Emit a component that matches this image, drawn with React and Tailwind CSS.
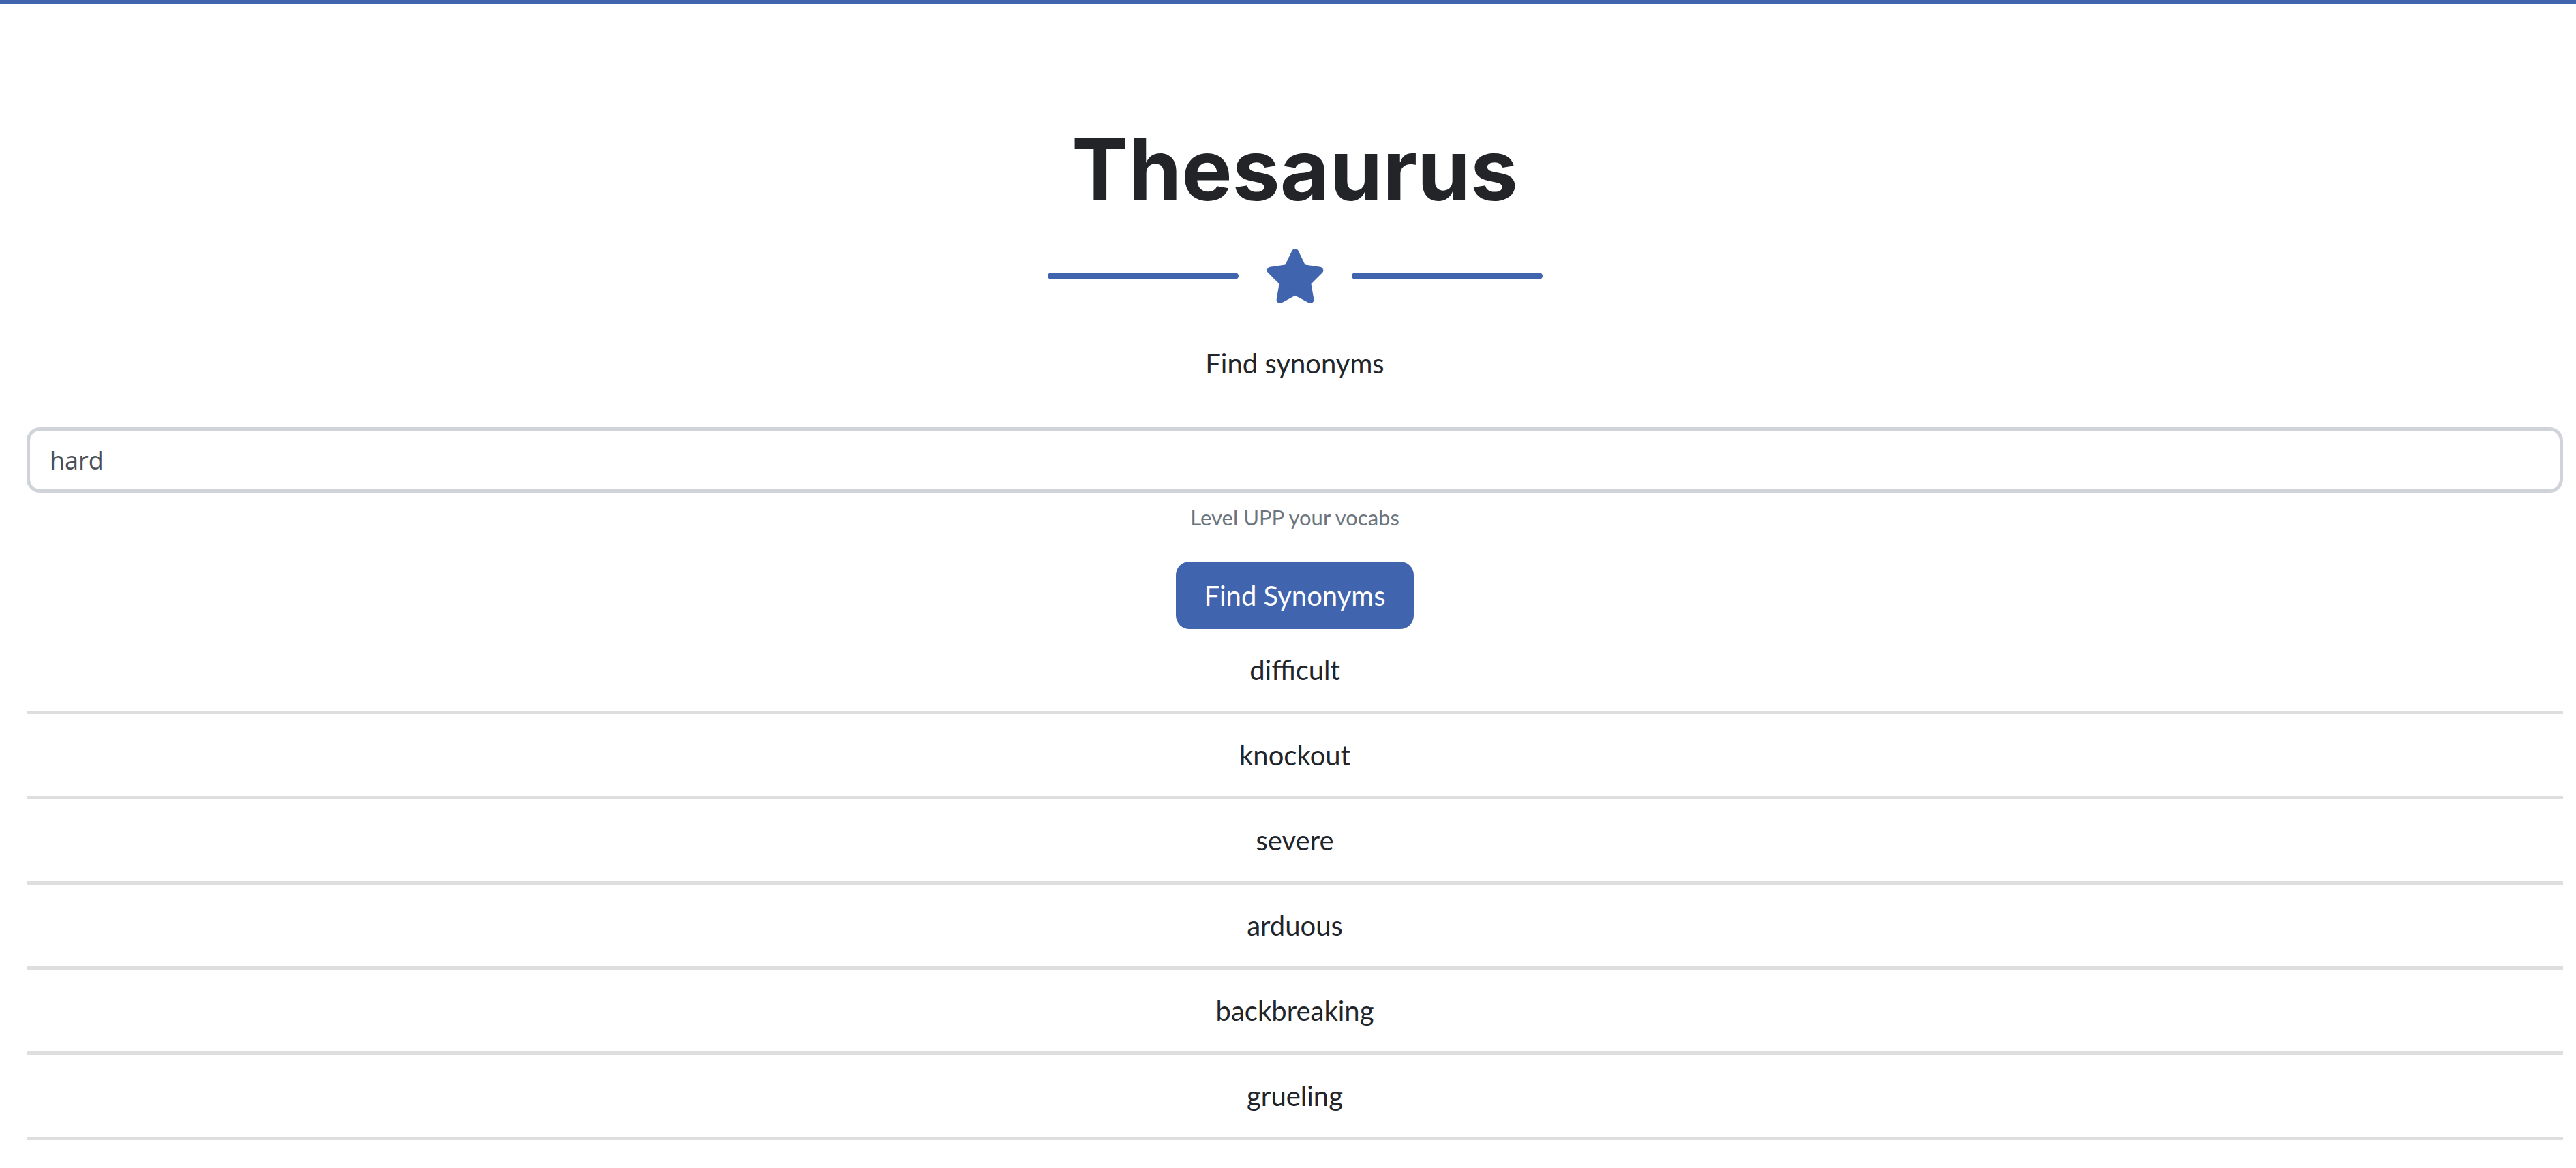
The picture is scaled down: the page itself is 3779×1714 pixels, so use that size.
import React, { useState } from "react";

const SYNONYMS = ["difficult", "knockout", "severe", "arduous", "backbreaking", "grueling"];

const Star = () => (
  <svg viewBox="0 0 576 512" className="h-[80px] w-[90px] fill-[#4164ae]">
    <path d="M316.9 18C311.6 7 300.4 0 288.1 0s-23.4 7-28.8 18L195 150.3 51.4 171.5c-12 1.8-22 10.2-25.7 21.7s-.7 24.2 7.9 32.7L137.8 329 113.2 474.7c-2 12 3 24.2 12.9 31.3s23 8 33.8 2.3l128.3-68.5 128.3 68.5c10.8 5.7 23.9 4.9 33.8-2.3s14.9-19.3 12.9-31.3L438.5 329 542.7 225.9c8.6-8.5 11.7-21.2 7.9-32.7s-13.7-19.9-25.7-21.7L381.2 150.3 316.9 18z" />
  </svg>
);

const App = () => {
  const [word, setWord] = useState("hard");

  return (
    <div className="bg-white font-['Lato',sans-serif] text-[#212529]">
      <div className="h-[6px] bg-[#4164ae]" />

      <div className="pl-[39px] pr-[19px] flex flex-col items-center">
        {/* heading */}
        <h1 className="mt-[178px] text-[125px] leading-[130px] font-bold font-['Inter',sans-serif] text-[#232428]">
          Thesaurus
        </h1>

        <div className="mt-[51px] flex items-center">
          <div className="h-[10px] w-[280px] rounded-full bg-[#4164ae]" />
          <div className="mx-[38px]">
            <Star />
          </div>
          <div className="h-[10px] w-[280px] rounded-full bg-[#4164ae]" />
        </div>

        <p className="mt-[59px] text-[40px] leading-[58px]">Find synonyms</p>

        <input
          className="mt-[65px] h-[96px] w-full rounded-[20px] border-[5px] border-[#d0d3d9] px-[29px] text-[36px] text-[#495057] font-['Open_Sans',sans-serif] outline-none"
          value={word}
          onChange={(e) => setWord(e.target.value)}
        />
        <small className="mt-[13px] text-[31px] leading-[46px] text-[#6c757d]">Level UPP your vocabs</small>

        <button className="mt-[42px] h-[99px] rounded-[20px] bg-[#4164ae] px-[41px] text-[40px] text-white">
          Find Synonyms
        </button>

        {/* results */}
        <ul className="w-full">
          {SYNONYMS.map((s) => (
            <li
              key={s}
              className="flex h-[125px] items-center justify-center border-b-[5px] border-[#dedede] text-[40px]"
            >
              {s}
            </li>
          ))}
        </ul>
      </div>
    </div>
  );
};

export default App;
